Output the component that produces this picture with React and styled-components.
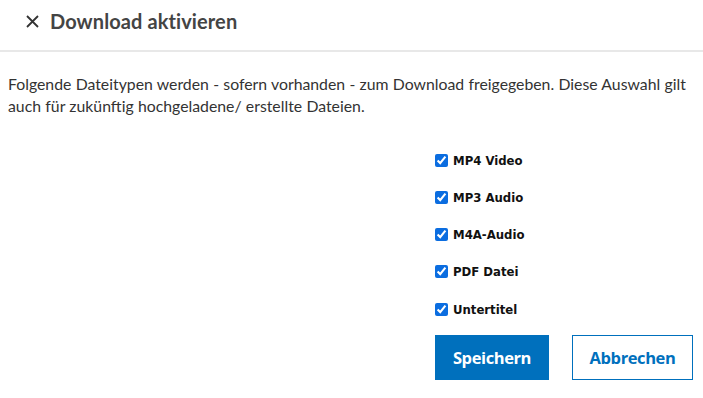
import React from "react";
import styled, { createGlobalStyle } from "styled-components";

const Global = createGlobalStyle`
  html, body { margin: 0; padding: 0; background: #fff; }
  body { width: 703px; height: 398px; overflow: hidden; }
`;

const Page = styled.div`
  width: 703px;
  height: 398px;
  display: flex;
  flex-direction: column;
  font-family: "Open Sans", sans-serif;
`;

const Header = styled.header`
  height: 52px;
  box-sizing: border-box;
  border-bottom: 2px solid #e8e8e8;
  display: flex;
  align-items: center;
  padding: 0 0 8px 26px;
  gap: 11px;
`;

const CloseButton = styled.button`
  border: 0;
  background: none;
  padding: 0;
  width: 13px;
  height: 13px;
  display: flex;
  cursor: pointer;
`;

const Title = styled.h1`
  margin: 0;
  font-family: Lato, sans-serif;
  font-weight: 700;
  font-size: 20px;
  color: #444;
  letter-spacing: 0.1px;
`;

const Intro = styled.p`
  margin: 21px 0 0 8px;
  width: 692px;
  font-family: Lato, sans-serif;
  font-size: 15.8px;
  word-spacing: 0.25px;
  line-height: 22px;
  color: #333;
`;

const Form = styled.form`
  margin: 36px 0 0 435px;
  display: flex;
  flex-direction: column;
`;

const Options = styled.div`
  display: flex;
  flex-direction: column;
  gap: 23.3px;
`;

const Option = styled.label`
  display: flex;
  align-items: center;
  gap: 5px;
  height: 14px;
  font-family: "DejaVu Sans Condensed", "DejaVu Sans", sans-serif;
  font-weight: 700;
  font-size: 13px;
  color: #111;
  cursor: pointer;
`;

const Check = styled.input`
  margin: 0;
  width: 13px;
  height: 13px;
  accent-color: #0b6de0;
`;

const Actions = styled.div`
  display: flex;
  gap: 23px;
  margin-top: 19px;
`;

const Button = styled.button`
  height: 45px;
  box-sizing: border-box;
  padding: 0;
  width: ${(p) => p.$w}px;
  font-family: "Open Sans", sans-serif;
  font-weight: 700;
  font-size: 16.5px;
  letter-spacing: -0.4px;
  border: 1px solid #0070bd;
  background: ${(p) => (p.$primary ? "#0070bd" : "#fff")};
  color: ${(p) => (p.$primary ? "#fff" : "#0070bd")};
  cursor: pointer;
`;

const items = ["MP4 Video", "MP3 Audio", "M4A-Audio", "PDF Datei", "Untertitel"];

export default function App() {
  return (
    <Page>
      <Global />
      <Header>
        <CloseButton type="button" aria-label="Schließen">
          <svg width="13" height="13" viewBox="0 0 13 13">
            <path d="M1 1L12 12M12 1L1 12" stroke="#333" strokeWidth="1.8" />
          </svg>
        </CloseButton>
        <Title>Download aktivieren</Title>
      </Header>
      <Intro>
        Folgende Dateitypen werden - sofern vorhanden - zum Download freigegeben. Diese Auswahl gilt
        auch für zukünftig hochgeladene/ erstellte Dateien.
      </Intro>
      <Form onSubmit={(e) => e.preventDefault()}>
        <Options>
          {items.map((t) => (
            <Option key={t}>
              <Check type="checkbox" defaultChecked />
              {t}
            </Option>
          ))}
        </Options>
        <Actions>
          <Button $primary $w={114} type="submit">Speichern</Button>
          <Button $w={121} type="button">Abbrechen</Button>
        </Actions>
      </Form>
    </Page>
  );
}
